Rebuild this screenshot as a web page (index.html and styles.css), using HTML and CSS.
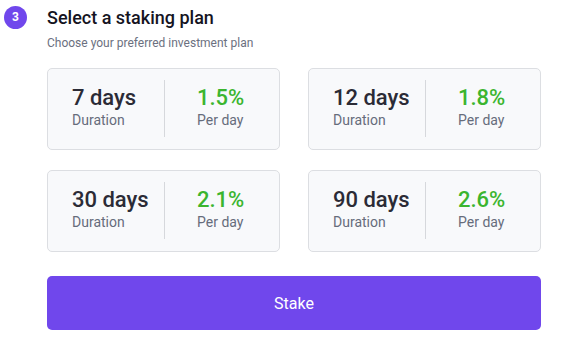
FILE: index.html
```html
<!DOCTYPE html>
<html lang="en">
<head>
    <meta charset="UTF-8">
    <meta name="viewport" content="width=device-width, initial-scale=1.0">
    <title>Select a staking plan</title>
    <link rel="stylesheet" href="styles.css">
</head>
<body>
    <div class="step">
        <div class="step-head">
            <span class="step-num">3</span>
            <div>
                <h2>Select a staking plan</h2>
                <p class="hint">Choose your preferred investment plan</p>
            </div>
        </div>

        <div class="plans">
            <div class="plan">
                <div class="plan-col">
                    <div class="plan-big">7 days</div>
                    <div class="plan-label">Duration</div>
                </div>
                <div class="plan-col rate">
                    <div class="plan-big">1.5%</div>
                    <div class="plan-label">Per day</div>
                </div>
            </div>
            <div class="plan">
                <div class="plan-col">
                    <div class="plan-big">12 days</div>
                    <div class="plan-label">Duration</div>
                </div>
                <div class="plan-col rate">
                    <div class="plan-big">1.8%</div>
                    <div class="plan-label">Per day</div>
                </div>
            </div>
            <div class="plan">
                <div class="plan-col">
                    <div class="plan-big">30 days</div>
                    <div class="plan-label">Duration</div>
                </div>
                <div class="plan-col rate">
                    <div class="plan-big">2.1%</div>
                    <div class="plan-label">Per day</div>
                </div>
            </div>
            <div class="plan">
                <div class="plan-col">
                    <div class="plan-big">90 days</div>
                    <div class="plan-label">Duration</div>
                </div>
                <div class="plan-col rate">
                    <div class="plan-big">2.6%</div>
                    <div class="plan-label">Per day</div>
                </div>
            </div>
        </div>

        <button class="stake-btn">Stake</button>
    </div>
</body>
</html>
```

FILE: styles.css
```css
body {
    margin: 0;
    padding: 0;
    background-color: #fff;
    font-family: Roboto, "Liberation Sans", sans-serif;
}

.step {
    width: 541px;
}

.step-head {
    display: flex;
    align-items: flex-start;
    padding: 6px 0 0 4px;
}

.step-num {
    flex: none;
    width: 23px;
    height: 23px;
    border-radius: 50%;
    background-color: #7047ec;
    color: #fff;
    font-size: 12px;
    font-weight: bold;
    line-height: 23px;
    text-align: center;
    margin-right: 20px;
}

h2 {
    margin: 0;
    font-size: 18px;
    font-weight: 500;
    line-height: 24px;
    color: #15141f;
}

.hint {
    margin: 6px 0 0;
    font-size: 12px;
    line-height: 14px;
    color: #6b7080;
}

.plans {
    display: grid;
    grid-template-columns: 233px 233px;
    column-gap: 28px;
    row-gap: 20px;
    margin: 18px 0 0 47px;
}

.plan {
    box-sizing: border-box;
    display: flex;
    align-items: flex-start;
    height: 82px;
    padding-top: 11px;
    background-color: #f8f9fb;
    border: 1px solid #dcdee2;
    border-radius: 5px;
}

.plan-col {
    box-sizing: border-box;
    width: 116px;
    padding: 5px 0 8px 24px;
}

.plan-col.rate {
    width: 115px;
    padding-left: 32px;
    border-left: 1px solid #d6d8dc;
}

.plan-big {
    font-size: 22px;
    font-weight: 500;
    line-height: 26px;
    color: #2b2b36;
}

.rate .plan-big {
    color: #3bb52f;
}

.plan-label {
    font-size: 14px;
    line-height: 18px;
    color: #666c7b;
}

.stake-btn {
    display: block;
    width: 494px;
    height: 54px;
    margin: 24px 0 0 47px;
    border: none;
    border-radius: 5px;
    background-color: #7047ec;
    color: #fff;
    font-family: Roboto, "Liberation Sans", sans-serif;
    font-size: 16px;
    cursor: pointer;
}
```
